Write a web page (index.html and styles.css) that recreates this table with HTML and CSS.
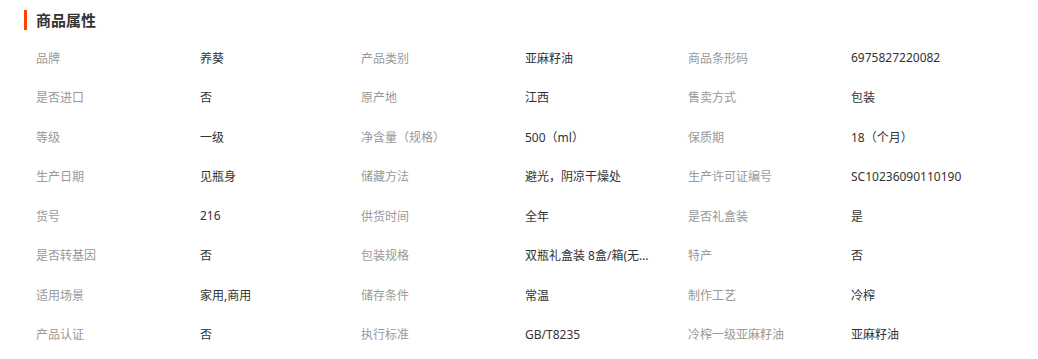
FILE: index.html
```html
<!DOCTYPE html>
<html lang="zh">
<head>
<meta charset="utf-8">
<title>商品属性</title>
<link rel="stylesheet" href="styles.css">
</head>
<body>
<section class="attrs">
  <h2 class="attrs-title">商品属性</h2>
  <div class="attrs-grid">
    <div class="lbl">品牌</div><div class="val">养葵</div>
    <div class="lbl">产品类别</div><div class="val">亚麻籽油</div>
    <div class="lbl">商品条形码</div><div class="val">6975827220082</div>

    <div class="lbl">是否进口</div><div class="val">否</div>
    <div class="lbl">原产地</div><div class="val">江西</div>
    <div class="lbl">售卖方式</div><div class="val">包装</div>

    <div class="lbl">等级</div><div class="val">一级</div>
    <div class="lbl">净含量（规格）</div><div class="val">500（ml）</div>
    <div class="lbl">保质期</div><div class="val">18（个月）</div>

    <div class="lbl">生产日期</div><div class="val">见瓶身</div>
    <div class="lbl">储藏方法</div><div class="val">避光，阴凉干燥处</div>
    <div class="lbl">生产许可证编号</div><div class="val">SC10236090110190</div>

    <div class="lbl">货号</div><div class="val">216</div>
    <div class="lbl">供货时间</div><div class="val">全年</div>
    <div class="lbl">是否礼盒装</div><div class="val">是</div>

    <div class="lbl">是否转基因</div><div class="val">否</div>
    <div class="lbl">包装规格</div><div class="val">双瓶礼盒装 8盒/箱(无外箱)</div>
    <div class="lbl">特产</div><div class="val">否</div>

    <div class="lbl">适用场景</div><div class="val">家用,商用</div>
    <div class="lbl">储存条件</div><div class="val">常温</div>
    <div class="lbl">制作工艺</div><div class="val">冷榨</div>

    <div class="lbl">产品认证</div><div class="val">否</div>
    <div class="lbl">执行标准</div><div class="val">GB/T8235</div>
    <div class="lbl">冷榨一级亚麻籽油</div><div class="val">亚麻籽油</div>
  </div>
</section>
</body>
</html>
```

FILE: styles.css
```css
html, body {
  margin: 0;
  padding: 0;
  background: #fff;
}
body {
  font-family: "Noto Sans", "Noto Sans CJK SC", sans-serif;
  font-size: 12px;
  color: #333;
}
.attrs {
  padding: 10px 0 0 24px;
}
.attrs-title {
  margin: 0;
  height: 20px;
  line-height: 20px;
  font-size: 15px;
  font-weight: bold;
  color: #333;
  border-left: 3px solid #ff4400;
  padding-left: 9px;
}
.attrs-grid {
  margin-top: 8px;
  padding-left: 12px;
  display: grid;
  grid-template-columns: 164px 161px 164px 163px 163px 170px;
  grid-auto-rows: 39.5px;
  align-items: center;
}
.lbl {
  color: #999;
  white-space: nowrap;
}
.val {
  color: #333;
  white-space: nowrap;
  overflow: hidden;
  text-overflow: ellipsis;
  max-width: 130px;
}
```
